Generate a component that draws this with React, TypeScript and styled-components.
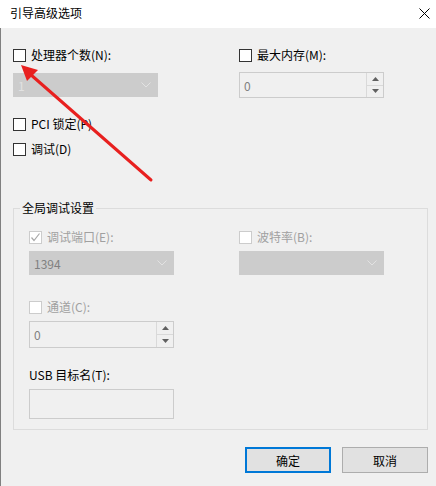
import React from "react";
import styled, { createGlobalStyle } from "styled-components";

const Global = createGlobalStyle`
  html, body { margin: 0; padding: 0; background: #f0f0f0; }
  body { font-family: "Noto Sans CJK SC", "Noto Sans", sans-serif; font-size: 12px; color: #000; }
  * { box-sizing: border-box; }
`;

const Window = styled.div`
  position: relative;
  width: 436px;
  height: 486px;
  display: flex;
  flex-direction: column;
  overflow: hidden;
`;

const TitleBar = styled.div`
  height: 28px;
  background: #fff;
  display: flex;
  align-items: center;
  justify-content: space-between;
  padding: 0 6px 3px 10px;
  font-size: 12px;
  line-height: 16px;
`;

const CloseBtn = styled.div`
  width: 11px;
  height: 11px;
  margin-top: 2px;
  display: flex;
`;

const Body = styled.div`
  flex: 1;
  background: #f0f0f0;
  border-left: 1px solid #808080;
  padding: 19px 8px 0 12px;
  display: flex;
  flex-direction: column;
`;

const Columns = styled.div<{ $left: number }>`
  display: grid;
  grid-template-columns: ${(p) => p.$left}px 145px;
  align-items: start;
`;

const Col = styled.div`
  display: flex;
  flex-direction: column;
`;

const CheckRow = styled.label<{ $mt?: number; $disabled?: boolean }>`
  display: flex;
  align-items: center;
  gap: 5px;
  height: 16px;
  line-height: 16px;
  margin-top: ${(p) => p.$mt ?? 0}px;
  color: ${(p) => (p.$disabled ? "#a0a0a0" : "#000")};
  white-space: nowrap;
`;

const Box = styled.span<{ $disabled?: boolean }>`
  width: 13px;
  height: 13px;
  flex: none;
  border: 1px solid ${(p) => (p.$disabled ? "#cccccc" : "#333333")};
  background: #fff;
  display: flex;
  align-items: center;
  justify-content: center;
`;

const Select = styled.div<{ $mt: number; $color: string }>`
  margin-top: ${(p) => p.$mt}px;
  width: 145px;
  height: 24px;
  background: #cccccc;
  border: 1px solid #cccccc;
  display: flex;
  align-items: center;
  justify-content: space-between;
  padding: 0 6px 0 4px;
  font-size: 12px;
  color: ${(p) => p.$color};
`;

const Spinner = styled.div<{ $mt: number; $h: number }>`
  margin-top: ${(p) => p.$mt}px;
  width: 145px;
  height: ${(p) => p.$h}px;
  border: 1px solid #cccccc;
  background: #f0f0f0;
  display: flex;
`;

const SpinValue = styled.div`
  flex: 1;
  display: flex;
  align-items: center;
  padding-left: 4px;
  color: #808080;
  font-size: 12px;
`;

const SpinButtons = styled.div`
  width: 17px;
  border-left: 1px solid #d9d9d9;
  display: flex;
  flex-direction: column;
`;

const SpinBtn = styled.div<{ $top?: boolean }>`
  flex: 1;
  display: flex;
  align-items: center;
  justify-content: center;
  border-top: ${(p) => (p.$top ? "none" : "1px solid #d9d9d9")};
`;

const Group = styled.fieldset`
  margin: 43px 0 0 0;
  width: 415px;
  border: 1px solid #dcdcdc;
  padding: 13px 0 10px 15px;
  min-width: 0;
`;

const Legend = styled.legend`
  padding: 0 2px;
  margin-left: -9px;
  font-size: 12px;
  line-height: 16px;
  color: #000;
`;

const Label = styled.div<{ $mt: number }>`
  margin-top: ${(p) => p.$mt}px;
  height: 16px;
  line-height: 16px;
  white-space: nowrap;
`;

const TextBox = styled.div`
  margin-top: 6px;
  width: 145px;
  height: 30px;
  border: 1px solid #cccccc;
  background: #f0f0f0;
`;

const ButtonRow = styled.div`
  margin-top: 17px;
  display: flex;
  justify-content: flex-end;
  gap: 11px;
`;

const Button = styled.div<{ $primary?: boolean }>`
  width: 86px;
  height: 26px;
  background: #e1e1e1;
  border: ${(p) => (p.$primary ? "2px solid #0078d7" : "1px solid #adadad")};
  display: flex;
  align-items: center;
  justify-content: center;
  font-size: 12px;
  color: #000;
`;

const Overlay = styled.svg`
  position: absolute;
  left: 0;
  top: 0;
  pointer-events: none;
`;

const Chevron = ({ color }: { color: string }) => (
  <svg width="10" height="6" viewBox="0 0 10 6">
    <path d="M0.5 0.5 L5 5 L9.5 0.5" fill="none" stroke={color} strokeWidth="1" />
  </svg>
);

const Check = () => (
  <svg width="11" height="11" viewBox="0 0 11 11">
    <path d="M1.5 5.5 L4 8.5 L9.5 1.5" fill="none" stroke="#a8a8a8" strokeWidth="1.2" />
  </svg>
);

const Arrow = ({ up }: { up?: boolean }) => (
  <svg width="7" height="4" viewBox="0 0 7 4">
    {up ? <path d="M0 4 L3.5 0 L7 4 Z" fill="#606060" /> : <path d="M0 0 L3.5 4 L7 0 Z" fill="#606060" />}
  </svg>
);

const SpinBox = ({ mt, h }: { mt: number; h: number }) => (
  <Spinner $mt={mt} $h={h}>
    <SpinValue>0</SpinValue>
    <SpinButtons>
      <SpinBtn $top>
        <Arrow up />
      </SpinBtn>
      <SpinBtn>
        <Arrow />
      </SpinBtn>
    </SpinButtons>
  </Spinner>
);

export default function App() {
  return (
    <>
      <Global />
      <Window>
        <TitleBar>
          <span>引导高级选项</span>
          <CloseBtn>
            <svg width="11" height="11" viewBox="0 0 11 11">
              <path d="M0.5 0.5 L10.5 10.5 M10.5 0.5 L0.5 10.5" stroke="#000" strokeWidth="1" />
            </svg>
          </CloseBtn>
        </TitleBar>
        <Body>
          <Columns $left={226}>
            <Col>
              <CheckRow>
                <Box />
                处理器个数(N):
              </CheckRow>
              <Select $mt={10} $color="#e2e2e2">
                <span>1</span>
                <Chevron color="#e2e2e2" />
              </Select>
              <CheckRow $mt={19}>
                <Box />
                PCI 锁定(P)
              </CheckRow>
              <CheckRow $mt={9}>
                <Box />
                调试(D)
              </CheckRow>
            </Col>
            <Col>
              <CheckRow>
                <Box />
                最大内存(M):
              </CheckRow>
              <SpinBox mt={9} h={26} />
            </Col>
          </Columns>
          <Group>
            <Legend>全局调试设置</Legend>
            <Columns $left={210}>
              <Col>
                <CheckRow $disabled>
                  <Box $disabled>
                    <Check />
                  </Box>
                  调试端口(E):
                </CheckRow>
                <Select $mt={6} $color="#808080">
                  <span>1394</span>
                  <Chevron color="#e2e2e2" />
                </Select>
                <CheckRow $mt={24} $disabled>
                  <Box $disabled />
                  通道(C):
                </CheckRow>
                <SpinBox mt={6} h={27} />
                <Label $mt={19}>USB 目标名(T):</Label>
                <TextBox />
              </Col>
              <Col>
                <CheckRow $disabled>
                  <Box $disabled />
                  波特率(B):
                </CheckRow>
                <Select $mt={6} $color="#808080">
                  <span />
                  <Chevron color="#e2e2e2" />
                </Select>
              </Col>
            </Columns>
          </Group>
          <ButtonRow>
            <Button $primary>确定</Button>
            <Button>取消</Button>
          </ButtonRow>
        </Body>
        <Overlay width="436" height="486" viewBox="0 0 436 486">
          <line x1="151" y1="180" x2="30" y2="74" stroke="#e8201f" strokeWidth="3" strokeLinecap="round" />
          <path d="M21 65 L38 70 L27 81 Z" fill="#e8201f" />
        </Overlay>
      </Window>
    </>
  );
}
